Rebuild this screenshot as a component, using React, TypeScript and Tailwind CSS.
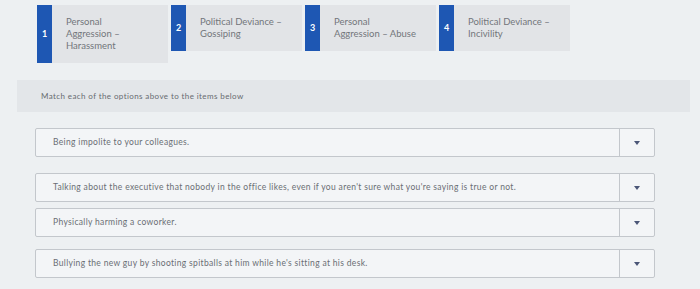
import React from 'react';

const options = [
  { n: 1, lines: ['Personal', 'Aggression –', 'Harassment'] },
  { n: 2, lines: ['Political Deviance –', 'Gossiping'] },
  { n: 3, lines: ['Personal', 'Aggression – Abuse'] },
  { n: 4, lines: ['Political Deviance –', 'Incivility'] },
];

const items = [
  { text: 'Being impolite to your colleagues.', cls: 'mt-[16px] h-[29px]' },
  {
    text: "Talking about the executive that nobody in the office likes, even if you aren't sure what you're saying is true or not.",
    cls: 'mt-[16px] h-[29px]',
  },
  { text: 'Physically harming a coworker.', cls: 'mt-[6px] h-[29px]' },
  { text: "Bullying the new guy by shooting spitballs at him while he's sitting at his desk.", cls: 'mt-[12px] h-[29px]' },
];

function OptionCard({ n, lines }: { n: number; lines: string[] }) {
  return (
    <div className="flex w-[131px] bg-[#e2e4e7]">
      <div className="w-[15px] bg-[#1e57b3] flex items-center justify-center text-white text-[9px] font-bold">
        {n}
      </div>
      <div className="pl-[14px] py-[11px] text-[9.5px] leading-[12px] text-[#72767b]">
        {lines.map((l) => (
          <div key={l}>{l}</div>
        ))}
      </div>
    </div>
  );
}

function MatchRow({ text, cls }: { text: string; cls: string }) {
  return (
    <div className={`flex w-[620px] ml-[35px] border border-[#c3c7cc] rounded-[2px] bg-[#f3f5f7] ${cls}`}>
      <div className="flex-1 flex items-center pl-[17px] text-[8.5px] tracking-[0.33px] text-[#6a6e74]">{text}</div>
      <div className="w-[35px] border-l border-[#c3c7cc] flex items-center justify-center">
        <svg width="6" height="4" viewBox="0 0 6 4">
          <path d="M0 0 L6 0 L3 4 Z" fill="#4b5677" />
        </svg>
      </div>
    </div>
  );
}

export default function App() {
  return (
    <div
      className="w-[700px] h-[289px] overflow-hidden bg-[#edf0f2] flex flex-col"
      style={{ fontFamily: 'Lato, "Open Sans", sans-serif' }}
    >
      <div className="flex items-start gap-[3px] pl-[37px] pt-[5px]">
        {options.map((o) => (
          <OptionCard key={o.n} n={o.n} lines={o.lines} />
        ))}
      </div>
      <div className="mt-[17px] ml-[17px] w-[673px] h-[32px] bg-[#e3e6e9] flex items-center pl-[24px] text-[8px] tracking-[0.4px] text-[#676b70]">
        Match each of the options above to the items below
      </div>
      {items.map((it) => (
        <MatchRow key={it.text} text={it.text} cls={it.cls} />
      ))}
    </div>
  );
}
